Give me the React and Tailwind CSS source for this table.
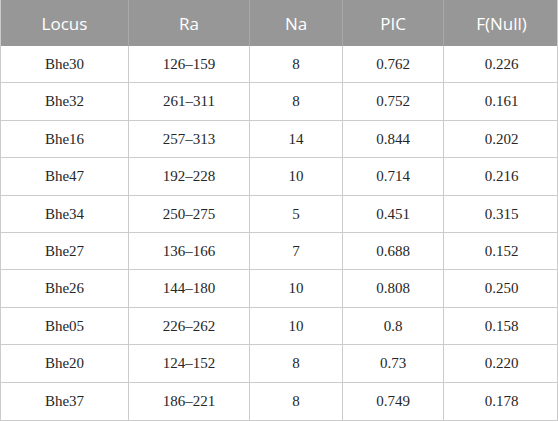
const headers = ["Locus", "Ra", "Na", "PIC", "F(Null)"];

const rows = [
  ["Bhe30", "126–159", "8", "0.762", "0.226"],
  ["Bhe32", "261–311", "8", "0.752", "0.161"],
  ["Bhe16", "257–313", "14", "0.844", "0.202"],
  ["Bhe47", "192–228", "10", "0.714", "0.216"],
  ["Bhe34", "250–275", "5", "0.451", "0.315"],
  ["Bhe27", "136–166", "7", "0.688", "0.152"],
  ["Bhe26", "144–180", "10", "0.808", "0.250"],
  ["Bhe05", "226–262", "10", "0.8", "0.158"],
  ["Bhe20", "124–152", "8", "0.73", "0.220"],
  ["Bhe37", "186–221", "8", "0.749", "0.178"],
];

const widths = ["w-[127px]", "w-[121px]", "w-[93px]", "w-[101px]", "w-[116px]"];

const App = () => {
  return (
    <div className="w-[558px] h-[422px] bg-white">
      <div className="w-[558px] border-l border-r border-b border-[#cccccc]">
        <div className="flex h-[46px] bg-[#979797] font-['Open_Sans',sans-serif] text-white text-[17px]">
          {headers.map((h, i) => (
            <div
              key={h}
              className={`${widths[i]} ${i > 0 ? "border-l border-[#a9a9a9]" : ""} shrink-0 flex items-center justify-center pt-[1px]`}
            >
              {h}
            </div>
          ))}
        </div>
        {rows.map((r, ri) => (
          <div
            key={r[0]}
            className={`flex h-[37.4px] font-['Liberation_Serif',serif] text-[15px] text-[#262626] ${ri < rows.length - 1 ? "border-b border-[#cccccc]" : ""}`}
          >
            {r.map((c, i) => (
              <div
                key={i}
                className={`${widths[i]} ${i > 0 ? "border-l border-[#cccccc]" : ""} shrink-0 flex items-center justify-center`}
              >
                {c}
              </div>
            ))}
          </div>
        ))}
      </div>
    </div>
  );
};

export default App;
